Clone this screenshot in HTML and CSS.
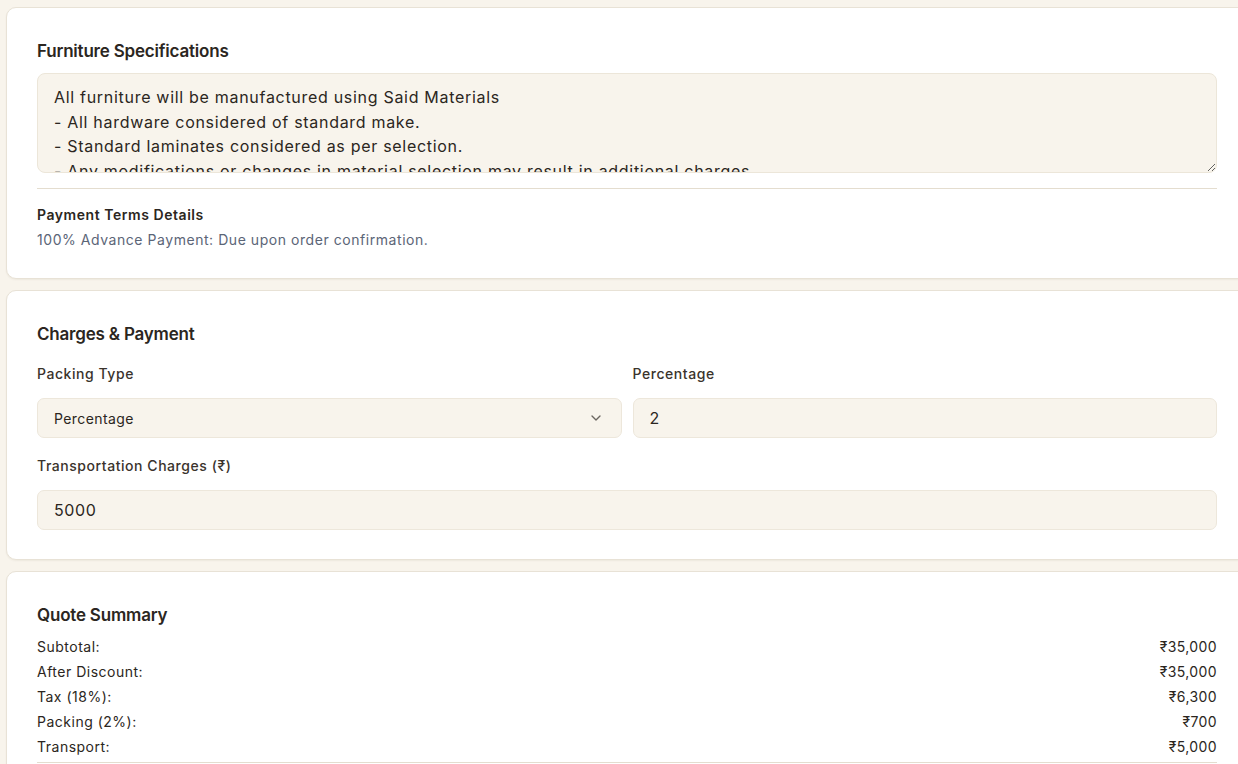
FILE: index.html
```html
<!DOCTYPE html>
<html>
<head>
<meta charset="utf-8">
<link rel="stylesheet" href="styles.css">
</head>
<body>
<div class="page">
  <section class="card card-spec">
    <h2 class="card-title">Furniture Specifications</h2>
    <textarea class="spec-text" readonly>All furniture will be manufactured using Said Materials
- All hardware considered of standard make.
- Standard laminates considered as per selection.
- Any modifications or changes in material selection may result in additional charges.</textarea>
    <div class="divider"></div>
    <div class="terms">
      <div class="terms-title">Payment Terms Details</div>
      <div class="terms-text">100% Advance Payment: Due upon order confirmation.</div>
    </div>
  </section>

  <section class="card card-charges">
    <h2 class="card-title">Charges &amp; Payment</h2>
    <div class="grid2">
      <div class="field">
        <label class="label">Packing Type</label>
        <div class="select">
          <span class="select-value">Percentage</span>
          <svg class="chevron" width="16" height="16" viewBox="0 0 24 24" fill="none" stroke="#6b6660" stroke-width="2" stroke-linecap="round" stroke-linejoin="round"><path d="M6 9l6 6 6-6"/></svg>
        </div>
      </div>
      <div class="field">
        <label class="label">Percentage</label>
        <div class="input">2</div>
      </div>
    </div>
    <div class="field field-transport">
      <label class="label">Transportation Charges (₹)</label>
      <div class="input">5000</div>
    </div>
  </section>

  <section class="card card-summary">
    <h2 class="card-title">Quote Summary</h2>
    <div class="rows">
      <div class="row"><span>Subtotal:</span><span class="amt">₹35,000</span></div>
      <div class="row"><span>After Discount:</span><span class="amt">₹35,000</span></div>
      <div class="row"><span>Tax (18%):</span><span class="amt">₹6,300</span></div>
      <div class="row"><span>Packing (2%):</span><span class="amt">₹700</span></div>
      <div class="row"><span>Transport:</span><span class="amt">₹5,000</span></div>
    </div>
    <div class="divider"></div>
  </section>
</div>
</body>
</html>
```
FILE: styles.css
```css
html, body {
  margin: 0;
  padding: 0;
  background: #f8f4ec;
  overflow: hidden;
}
body {
  font-family: Inter, "Noto Sans", "Liberation Sans", sans-serif;
  color: #2b2621;
  width: 1238px;
  height: 764px;
}
.page {
  padding: 7px 0 0 6px;
  display: flex;
  flex-direction: column;
  gap: 11px;
  width: 1242px;
}
.card {
  background: #ffffff;
  border: 1px solid #e8e2d6;
  border-radius: 10px;
  padding: 32px 30px 28px 30px;
  box-shadow: 0 1px 2px rgba(60, 45, 20, 0.06);
}
.card-title {
  margin: 0 0 11px 0;
  font-size: 17px;
  font-weight: 600;
  line-height: 22px;
  color: #2b2621;
  letter-spacing: -0.2px;
}
.spec-text {
  display: block;
  box-sizing: border-box;
  width: 100%;
  height: 100px;
  margin: 0;
  padding: 11px 16px;
  border: 1px solid #ece6d9;
  border-radius: 8px;
  background: #f8f4ec;
  font-family: Inter, "Noto Sans", sans-serif;
  font-size: 16px;
  line-height: 24.7px;
  letter-spacing: 0.7px;
  color: #2b2621;
  resize: vertical;
  overflow: hidden;
  outline: none;
}
.divider {
  height: 1px;
  background: #e4ddcf;
  margin-top: 15px;
}
.terms {
  padding-top: 16px;
}
.terms-title {
  font-size: 14px;
  font-weight: 600;
  line-height: 20px;
  letter-spacing: 0.55px;
  color: #2b2621;
}
.terms-text {
  font-size: 14px;
  line-height: 20px;
  margin-top: 5px;
  letter-spacing: 0.55px;
  color: #5b6577;
}
.card-charges {
  padding-bottom: 29px;
}
.card-charges .card-title {
  margin-bottom: 19px;
}
.grid2 {
  display: grid;
  grid-template-columns: 1fr 1fr;
  gap: 11px;
}
.field {
  display: flex;
  flex-direction: column;
}
.field-transport {
  margin-top: 18px;
}
.label {
  font-size: 14px;
  font-weight: 500;
  line-height: 20px;
  letter-spacing: 0.55px;
  color: #3a332c;
  margin-bottom: 14px;
}
.select, .input {
  box-sizing: border-box;
  height: 40px;
  border: 1px solid #ede7db;
  border-radius: 7px;
  background: #f8f4ec;
  display: flex;
  align-items: center;
  padding: 0 16px;
}
.select {
  justify-content: space-between;
  font-size: 14px;
  letter-spacing: 0.4px;
  color: #2b2621;
  padding-right: 17px;
}
.input {
  font-size: 16px;
  letter-spacing: 0.6px;
  color: #2b2621;
}
.chevron {
  display: block;
}
.card-summary .card-title {
  margin-bottom: 8px;
}
.rows {
  display: flex;
  flex-direction: column;
}
.row {
  display: flex;
  justify-content: space-between;
  font-size: 14px;
  line-height: 25px;
  letter-spacing: 0.5px;
  color: #2b2621;
}
.amt {
  font-family: Inter, "Liberation Sans", sans-serif;
  letter-spacing: 0.4px;
}
.card-summary .divider {
  margin-top: 3px;
}
```
